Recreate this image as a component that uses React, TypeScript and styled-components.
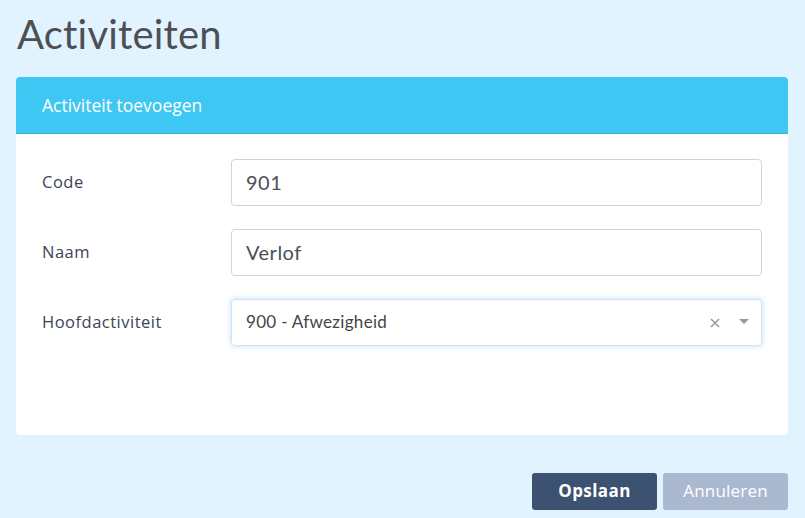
import React from "react";
import styled, { createGlobalStyle } from "styled-components";

const Global = createGlobalStyle`
  html, body { margin: 0; padding: 0; background: #e1f3fe; }
  body { font-family: "Open Sans", "Noto Sans", sans-serif; }
  * { box-sizing: border-box; }
`;

const Page = styled.div`
  width: 805px;
  height: 518px;
  padding: 0 17px 0 16px;
  display: flex;
  flex-direction: column;
  overflow: hidden;
`;

const Title = styled.h1`
  margin: 10px 0 0 1px;
  height: 67px;
  font-family: "Lato", "Noto Sans", sans-serif;
  font-size: 40px;
  font-weight: 400;
  line-height: 48px;
  letter-spacing: 0.2px;
  color: #4d4f54;
`;

const Card = styled.section`
  background: #fff;
  border-radius: 4px;
  overflow: hidden;
  height: 358px;
`;

const CardHeader = styled.div`
  height: 57px;
  background: #3fc7f3;
  border-bottom: 1px solid #37b3dc;
  color: #fff;
  font-size: 17.5px;
  padding: 0 26px 1px;
  display: flex;
  align-items: center;
`;

const CardBody = styled.div`
  padding: 25px 26px 0 26px;
  display: flex;
  flex-direction: column;
  gap: 23px;
`;

const Row = styled.div`
  display: grid;
  grid-template-columns: 189px 531px;
  align-items: center;
`;

const Label = styled.label`
  font-size: 16.5px;
  letter-spacing: 0.5px;
  font-weight: 500;
  color: #3a4556;
  padding-bottom: 3px;
`;

const Input = styled.div`
  height: 47px;
  border: 1px solid #cfd4da;
  border-radius: 4px;
  padding: 0 14px;
  display: flex;
  align-items: center;
  font-family: "Lato", "Noto Sans", sans-serif;
  font-size: 20px;
  letter-spacing: 0.5px;
  color: #4d4f54;
  padding-bottom: 2px;
`;

const Select = styled.div`
  height: 47px;
  border: 1px solid #cfe3f5;
  border-radius: 4px;
  padding: 0 12px 0 14px;
  display: flex;
  align-items: center;
  box-shadow: 0 0 4px 1px rgba(110, 180, 240, 0.35);
  font-family: "Lato", "Noto Sans", sans-serif;
  font-size: 17px;
  letter-spacing: 0.3px;
  color: #444;
`;

const SelectValue = styled.span`
  flex: 1;
  padding-bottom: 2px;
`;

const Clear = styled.span`
  color: #999;
  font-size: 16px;
  margin-right: 17px;
  font-family: "DejaVu Sans", sans-serif;
`;

const Caret = styled.span`
  width: 0;
  height: 0;
  border-left: 5px solid transparent;
  border-right: 5px solid transparent;
  border-top: 5px solid #999;
  margin-bottom: 3px;
`;

const Footer = styled.div`
  margin-top: 38px;
  display: flex;
  justify-content: flex-end;
  gap: 6px;
`;

const Button = styled.button<{ $variant: "primary" | "muted" }>`
  height: 37px;
  width: 125px;
  border: none;
  border-radius: 3px;
  font-family: "Open Sans", "Noto Sans", sans-serif;
  font-size: 17px;
  color: #fff;
  padding: 0 0 2px;
  background: ${(p) => (p.$variant === "primary" ? "#3d5170" : "#abb9d0")};
  font-weight: ${(p) => (p.$variant === "primary" ? 700 : 500)};
  letter-spacing: ${(p) => (p.$variant === "primary" ? "0.4px" : "0.2px")};
`;

export default function App() {
  return (
    <>
      <Global />
      <Page>
        <Title>Activiteiten</Title>
        <Card>
          <CardHeader>Activiteit toevoegen</CardHeader>
          <CardBody>
            <Row>
              <Label>Code</Label>
              <Input>901</Input>
            </Row>
            <Row>
              <Label>Naam</Label>
              <Input>Verlof</Input>
            </Row>
            <Row>
              <Label>Hoofdactiviteit</Label>
              <Select>
                <SelectValue>900 - Afwezigheid</SelectValue>
                <Clear>×</Clear>
                <Caret />
              </Select>
            </Row>
          </CardBody>
        </Card>
        <Footer>
          <Button $variant="primary">Opslaan</Button>
          <Button $variant="muted">Annuleren</Button>
        </Footer>
      </Page>
    </>
  );
}
